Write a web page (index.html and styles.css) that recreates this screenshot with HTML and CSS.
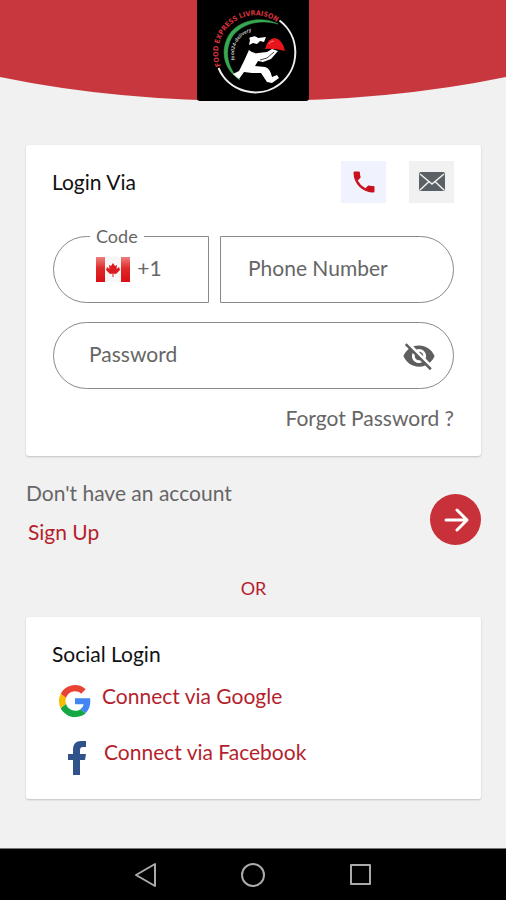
FILE: index.html
```html
<!DOCTYPE html>
<html lang="en">
<head>
    <meta charset="UTF-8">
    <meta name="viewport" content="width=device-width, initial-scale=1.0">
    <title>Login</title>
    <link rel="stylesheet" href="styles.css">
</head>
<body>
    <header class="top">
        <svg class="curve" viewBox="0 0 506 101" preserveAspectRatio="none" aria-hidden="true">
            <path d="M0 0H506V77Q390 101 253 101Q116 101 0 77Z" fill="#c8373e"/>
        </svg>
        <svg class="logo" viewBox="0 0 112 101" role="img" aria-label="Food Express Livraison">
            <defs>
                <path id="outer" d="M23.700 66A37 37 0 0 1 93 39"/>
                <path id="inner" d="M38 60A23 23 0 0 1 76 37"/>
            </defs>
            <path d="M0 0H112V98Q112 101 109 101H3Q0 101 0 98Z" fill="#000"/>
            <path d="M82.500 20.500A40 40 0 1 1 21.500 68" fill="none" stroke="#eee" stroke-width="2"/>
            <path d="M81 24C66 16 42 19 32 35C23 50 26 69 43 80C30 68 27 51 35 37C45 23 64 19 81 24Z" fill="#39a852" stroke="#39a852" stroke-width=".5"/>
            <text class="logo-name"><textPath href="#outer">FOOD EXPRESS LIVRAISON</textPath></text>
            <text class="logo-sub"><textPath href="#inner">food24-delivery</textPath></text>
            <g fill="#fff">
                <path d="M52 45L53 40Q51 37 55 37Q58 35 61 38L69 37L67 42L63 41L60 44L56 43Z"/>
                <path d="M52 50Q56 54 61 53L70 52L75 49L81 51L74 59L66 62L61 61L58 66L68 67Q73 68 75 77L80 75L82 78L75 83L70 82L64 73L55 73L47 72L42 79L36 74L42 71L47 61Z"/>
            </g>
            <path d="M63 60L70 58L77 52" fill="none" stroke="#444"/>
            <path d="M68 49Q71 38 78 38Q86 40 88 51Q77 48 68 49Z" fill="#e8141c"/>
            <path d="M72 44Q73 41 77 41" fill="none" stroke="#ff7a7a"/>
        </svg>
    </header>

    <main class="content">
        <form class="card login">
            <div class="login-head">
                <h1 class="title">Login Via</h1>
                <div class="tabs">
                    <button type="button" class="tab tab-active" aria-label="Phone">
                        <svg width="28" height="28" viewBox="0 0 24 24"><path fill="#c8101e" d="M6.600 10.800a15.200 15.200 0 0 0 6.600 6.600l2.200-2.200a1 1 0 0 1 1-.25 11.400 11.400 0 0 0 3.600.57 1 1 0 0 1 1 1V20a1 1 0 0 1-1 1A17 17 0 0 1 3 4a1 1 0 0 1 1-1h3.500a1 1 0 0 1 1 1 11.400 11.400 0 0 0 .57 3.600 1 1 0 0 1-.25 1z"/></svg>
                    </button>
                    <button type="button" class="tab" aria-label="Email">
                        <svg width="26" height="20" viewBox="0 0 26 20"><rect width="26" height="19" rx="2" fill="#5b5f66"/><path d="M1 2L13 12L25 2M1 18L10 9.500M25 18L16 9.500" fill="none" stroke="#f1f1f1" stroke-width="1.500"/></svg>
                    </button>
                </div>
            </div>

            <div class="phone-row">
                <fieldset class="code">
                    <legend>Code</legend>
                    <button type="button" class="code-button">
                        <svg width="34" height="25" viewBox="0 0 34 25" aria-label="Canada">
                            <defs>
                                <linearGradient id="red" x2="0" y2="1"><stop offset="0" stop-color="#ee7f7f"/><stop offset=".45" stop-color="#e02a2a"/><stop offset="1" stop-color="#d80f14"/></linearGradient>
                            </defs>
                            <path d="M0 0H34V25H0Z" fill="#f7f7f7"/>
                            <path d="M0 0H9V25H0ZM25 0H34V25H25Z" fill="url(#red)"/>
                            <path d="M17 6L19 9L21 8L20.500 12L23 10L24 13L20 17L17.500 16.500V20H16.500V16.500L14 17L10 13L11 10L13.500 12L13 8L15 9Z" fill="#dd1a1e"/>
                        </svg>
                        <span>+1</span>
                    </button>
                </fieldset>
                <input class="field phone" type="tel" placeholder="Phone Number" aria-label="Phone Number">
            </div>

            <div class="field password">
                <input type="password" placeholder="Password" aria-label="Password">
                <button type="button" class="eye" aria-label="Show password">
                    <svg width="34" height="34" viewBox="0 0 24 24"><path fill="#5e5e5e" d="M12 7c2.760 0 5 2.240 5 5 0 .65-.13 1.260-.36 1.830l2.920 2.920c1.510-1.260 2.700-2.890 3.430-4.750-1.730-4.390-6-7.500-11-7.500-1.400 0-2.740.25-3.980.7l2.160 2.160C10.740 7.130 11.350 7 12 7zM2 4.270l2.280 2.280.46.46C3.080 8.300 1.780 10.020 1 12c1.730 4.390 6 7.500 11 7.500 1.550 0 3.030-.3 4.380-.84l.42.42L19.730 22 21 20.730 3.270 3 2 4.270zM7.530 9.800l1.550 1.550c-.05.21-.08.43-.08.65 0 1.660 1.340 3 3 3 .22 0 .44-.03.65-.08l1.550 1.550c-.67.33-1.410.53-2.200.53-2.760 0-5-2.240-5-5 0-.79.2-1.530.53-2.200zm4.310-.78l3.150 3.150.02-.16c0-1.660-1.340-3-3-3l-.17.01z"/></svg>
                </button>
            </div>
            <a class="forgot" href="#">Forgot Password ?</a>
        </form>

        <div class="account">
            <div class="account-text">
                <span>Don't have an account</span>
                <a class="signup" href="#">Sign Up</a>
            </div>
            <button type="button" class="go" aria-label="Login">
                <svg width="26" height="26" viewBox="0 0 26 26"><path d="M3 13H23M14 3L24 13L14 23" fill="none" stroke="#fff" stroke-width="3" stroke-linecap="round" stroke-linejoin="round"/></svg>
            </button>
        </div>

        <p class="or">OR</p>

        <section class="card social">
            <h2 class="title">Social Login</h2>
            <a class="social-link" href="#">
                <svg width="32" height="32" viewBox="0 0 48 48" aria-hidden="true">
                    <path fill="#ea4335" d="M24 9.500c3.540 0 6.710 1.220 9.210 3.600l6.850-6.850C35.900 2.380 30.470 0 24 0 14.620 0 6.510 5.380 2.560 13.220l7.980 6.190C12.430 13.720 17.740 9.500 24 9.500z"/>
                    <path fill="#4285f4" d="M46.980 24.550c0-1.570-.15-3.090-.38-4.550H24v9.020h12.940c-.58 2.960-2.260 5.480-4.780 7.180l7.730 6c4.510-4.180 7.090-10.360 7.090-17.650z"/>
                    <path fill="#fbbc05" d="M10.530 28.590c-.48-1.450-.76-2.990-.76-4.590s.27-3.140.76-4.590l-7.980-6.190C.92 16.460 0 20.120 0 24c0 3.880.92 7.540 2.560 10.780l7.970-6.190z"/>
                    <path fill="#16a643" d="M24 48c6.480 0 11.930-2.130 15.890-5.810l-7.730-6c-2.150 1.450-4.920 2.300-8.160 2.300-6.260 0-11.570-4.220-13.470-9.910l-7.980 6.190C6.510 42.620 14.620 48 24 48z"/>
                </svg>
                <span>Connect via Google</span>
            </a>
            <a class="social-link facebook" href="#">
                <svg width="18" height="34" viewBox="0 0 18 34" aria-hidden="true"><path fill="#31538c" d="M5 34V19H0V13H5V9C5 3 8 0 13 0H18V6H15Q12 6 12 9V13H18L17 19H12V34Z"/></svg>
                <span>Connect via Facebook</span>
            </a>
        </section>
    </main>

    <nav class="system-bar">
        <button type="button" aria-label="Back"><svg width="24" height="26" viewBox="0 0 24 26"><path d="M2 13L21 2V24Z"/></svg></button>
        <button type="button" aria-label="Home"><svg width="26" height="26" viewBox="0 0 26 26"><circle cx="13" cy="13" r="11"/></svg></button>
        <button type="button" aria-label="Recent apps"><svg width="24" height="26" viewBox="0 0 24 26"><rect x="3" y="3" width="19" height="19"/></svg></button>
    </nav>
</body>
</html>
```

FILE: styles.css
```css
* {
    box-sizing: border-box;
}
body {
    margin: 0;
    min-height: 100vh;
    display: flex;
    flex-direction: column;
    background-color: #f1f1f1;
    color: #666;
    font-family: Lato, "Open Sans", sans-serif;
    font-size: 21px;
    line-height: 26px;
}
button, input {
    font: inherit;
    color: inherit;
    border: 0;
    padding: 0;
    background: none;
}
button {
    display: flex;
    align-items: center;
    justify-content: center;
    cursor: pointer;
}
a {
    color: #b51f2d;
    text-decoration: none;
}
svg {
    display: block;
    flex: none;
}

/* header */
.top {
    display: grid;
    justify-items: center;
}
.curve, .logo {
    grid-area: 1 / 1;
    height: 101px;
}
.curve {
    width: 100%;
}
.logo {
    width: 112px;
}
.logo-name {
    font: bold 7px "Liberation Sans Narrow", "DejaVu Sans Condensed", sans-serif;
    fill: #d8323c;
}
.logo-sub {
    font: italic bold 5px "Liberation Sans", sans-serif;
    fill: #ccc;
}

.content {
    flex: 1;
    padding: 44px 25px 48px 26px;
}
.card {
    background-color: #fff;
    border-radius: 3px;
    box-shadow: 0 1px 2px rgba(0, 0, 0, 0.2);
}
.title {
    margin: 0;
    font-size: 21px;
    font-weight: 400;
    color: #111;
}

/* login card */
.login {
    padding: 16px 27px 24px 26px;
}
.login-head {
    display: flex;
    align-items: center;
    justify-content: space-between;
    margin-bottom: 33px;
}
.tabs {
    display: flex;
    gap: 23px;
}
.tab {
    width: 45px;
    height: 42px;
    background-color: #f1f1f1;
}
.tab-active {
    background-color: #f0f2fd;
}
.phone-row {
    display: flex;
    gap: 11px;
    margin-bottom: 19px;
}
.phone-row, .password {
    margin-left: 1px;
}
.field, .code {
    height: 67px;
    border: 1px solid #8a8a8a;
}
.code {
    position: relative;
    flex: 0 0 156px;
    margin: 0;
    padding: 0;
    border-radius: 34px 0 0 34px;
}
/* label sits over the top border */
.code legend {
    position: absolute;
    top: -14px;
    left: 36px;
    padding: 0 6px;
    background-color: #fff;
    font-size: 18px;
}
.code-button {
    width: 100%;
    height: 100%;
    gap: 7px;
    padding-right: 4px;
}
.code-button span {
    padding-bottom: 4px;
}
.phone {
    flex: 1;
    min-width: 0;
    padding: 0 27px 4px;
    border-radius: 0 34px 34px 0;
}
input::placeholder {
    color: #666;
    opacity: 1;
}
.password {
    display: flex;
    align-items: center;
    padding: 0 17px 0 35px;
    border-radius: 34px;
}
.password input {
    flex: 1;
    min-width: 0;
    padding-bottom: 4px;
}
.forgot {
    display: block;
    margin-top: 16px;
    padding-bottom: 1px;
    text-align: right;
    color: #666;
}

/* sign up */
.account {
    display: flex;
    align-items: flex-end;
    justify-content: space-between;
    margin-top: 24px;
}
.account-text {
    display: flex;
    flex-direction: column;
    gap: 13px;
}
.signup {
    padding-left: 2px;
}
.go {
    width: 51px;
    height: 51px;
    border-radius: 50%;
    background-color: #c8303a;
}
.or {
    margin: 30px 0 16px;
    text-align: center;
    font-size: 18px;
    color: #b51f2d;
}

/* social card */
.social {
    padding: 24px 26px;
}
.social-link {
    display: flex;
    gap: 11px;
    margin-top: 16px;
    padding-left: 7px;
}
.social-link svg {
    margin-top: 2px;
}
.facebook {
    gap: 18px;
    margin-top: 22px;
    padding-left: 16px;
}

/* system bar */
.system-bar {
    display: flex;
    align-items: center;
    justify-content: center;
    gap: 82px;
    height: 52px;
    border-top: 1px solid #777;
    background-color: #000;
}
.system-bar svg {
    fill: none;
    stroke: #aaa;
    stroke-width: 2;
    stroke-linejoin: round;
}
```
